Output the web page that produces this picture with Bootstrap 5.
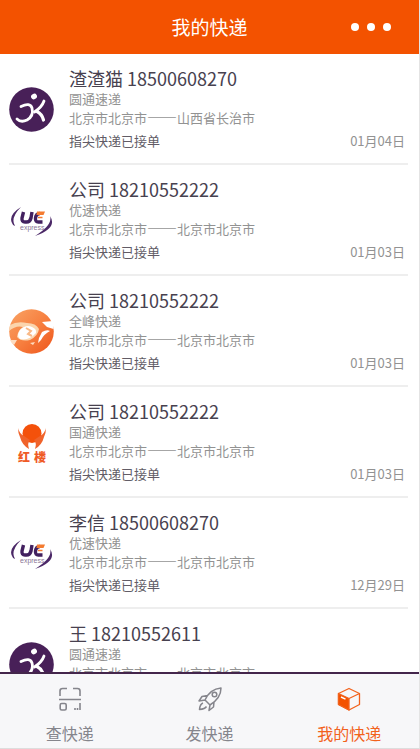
<!DOCTYPE html>
<html lang="zh-CN">
<head>
<meta charset="utf-8">
<meta name="viewport" content="width=device-width, initial-scale=1">
<title>我的快递</title>
<link href="https://cdn.jsdelivr.net/npm/bootstrap@5.3.0/dist/css/bootstrap.min.css" rel="stylesheet">
<style>
body{font-family:"Noto Sans CJK SC",sans-serif;color:#47414f}
.app{border-right:1px solid #e4e4e4;border-bottom:1px solid #ddd}
.topbar{background:#f35200;height:54px;grid-template-columns:1fr auto 1fr}
.topbar h1{font-size:19px;line-height:24px;font-weight:400}
.more-btn{background:none;gap:8px;margin-right:28px}
.more-btn i{width:8px;height:8px}
.parcels{scrollbar-width:none}
.parcels::-webkit-scrollbar{display:none}
.parcel{margin:0 11px 0 9px;padding:14px 3px 12px 0;border-bottom:2px solid #eee;gap:15px}
.parcel-text{min-height:83px}
.logo{width:45px;height:45px}
.who{font-size:18px;line-height:21px;font-weight:400}
.info{font-size:13px;line-height:19px;color:#929292}
.dash{font-size:15px;line-height:1}
.state{font-size:13px;line-height:19px;margin-top:4px}
.state span{color:#615c66}
.state time{color:#929292}
.tabs{background:#f7f7f9;border-top:2px solid #44264c;height:76px}
.tabs a{color:#85858c;font-size:16px;line-height:22px;gap:10px;padding-top:12px}
.tabs a.active{color:#f2621c}
.tabs svg{width:26px;height:26px}
</style>
<script src="https://cdn.jsdelivr.net/npm/bootstrap@5.3.0/dist/js/bootstrap.bundle.min.js"></script>
</head>
<body>
<svg class="position-absolute" width="0" height="0" aria-hidden="true">
<defs><linearGradient id="orb" x1="0" y1="0" x2="1" y2="1"><stop offset="0" stop-color="#f9a466"/><stop offset=".5" stop-color="#f78040"/><stop offset="1" stop-color="#ee541a"/></linearGradient></defs>
<symbol id="yto" viewBox="0 0 45 45">
<circle cx="22.500" cy="22.500" r="22.300" fill="#482058"/>
<ellipse cx="25" cy="9.500" rx="3" ry="2.700" transform="rotate(-30 25 9.500)" fill="#fff"/>
<g fill="none" stroke="#fff" stroke-linecap="round"><path d="M12 19.500Q21 15 23 21Q25 29 18 33Q12 36 8 32" stroke-width="2.800"/><path d="M35 14Q33 20 25.500 25" stroke-width="2.800"/><path d="M28 24.500Q33 27 34.500 33" stroke-width="3.200"/></g>
</symbol>
<symbol id="uc" viewBox="0 0 45 45">
<path d="M12 9Q-1 17 3 25Q4 28 6 28Q1 20 12 9Z" fill="#4b2867"/>
<path d="M41 18Q49 30 26 38Q44 27 41 18Z" fill="#4b2867"/>
<path d="M14.500 14L13 20Q12.500 24 16 24H17.500Q21 24 22 20L23 14" fill="none" stroke="#42205f" stroke-width="3.400"/>
<path d="M31 15.500Q27 15.500 26.500 20T30 24H33.500" fill="none" stroke="#42205f" stroke-width="3.400"/>
<path d="M28 13.500H36L34.500 17H27.500Z" fill="#f47b30"/><path d="M29 19.500H33.500" stroke="#f47b30" stroke-width="1.500"/>
<text x="11" y="32" font-size="7" font-family="Liberation Sans,sans-serif" fill="#8a7596">express</text>
</symbol>
<symbol id="qf" viewBox="0 0 45 45">
<circle cx="22.500" cy="22.500" r="22.300" fill="url(#orb)"/>
<path d="M1 16Q8 12 18 14Q27 14 30 20Q29 27 21 31Q12 33 8 28Q9 21 14 18Q7 16 0 22Z" fill="#fbd5ad"/>
<path d="M11 21Q17 15 23 18Q28 20 27 24Q20 32 11 30Q7 27 11 21Z" fill="#fff"/>
<path d="M17 19L22 22L19 25L23 27" fill="none" stroke="#f9b987" stroke-width="2"/>
<path d="M33 13L44 12Q45 16 44.500 20L38 18Z" fill="#fff"/>
<path d="M33 23Q38 20 41 22Q35 25 32 31L29 34L30 29Z" fill="#fff"/>
<path d="M1 31H8L5 36Q2 34 1 31ZM21 34L26 33L24 36Z" fill="#fddcc0"/>
</symbol>
<symbol id="hl" viewBox="0 0 45 45">
<circle cx="23" cy="13.500" r="9.500" fill="#f4510b"/>
<path d="M9 8Q10 13 15 16L21 20Q18 23 20 29Q13 25 11 17Q9 13 9 8ZM37 8Q36 13 31 16L25 20Q28 23 26 29Q33 25 35 17Q37 13 37 8Z" fill="#f0632b"/>
<text x="9" y="42" font-size="12" font-weight="900" font-family="Noto Sans CJK SC,sans-serif" fill="#ef5b26">红</text>
<text x="25" y="42" font-size="12" font-weight="900" font-family="Noto Sans CJK SC,sans-serif" fill="#ef5b26">楼</text>
</symbol>
</svg>
<div class="app d-flex flex-column vh-100">
<header class="topbar d-grid align-items-center text-white flex-shrink-0">
<span></span><h1 class="m-0">我的快递</h1>
<button type="button" class="more-btn border-0 p-0 d-flex align-items-center ms-auto" aria-label="更多"><i class="bg-white rounded-circle"></i><i class="bg-white rounded-circle"></i><i class="bg-white rounded-circle"></i></button>
</header>
<main class="parcels flex-grow-1 overflow-auto">
<ul class="list-unstyled m-0">
<li class="parcel d-flex align-items-center"><svg class="logo flex-shrink-0" aria-hidden="true"><use href="#yto"/></svg><div class="parcel-text flex-grow-1"><h2 class="who m-0">渣渣猫 18500608270</h2><div class="info">圆通速递</div><div class="info">北京市北京市<span class="dash">——</span>山西省长治市</div><div class="state d-flex justify-content-between"><span>指尖快递已接单</span><time>01月04日</time></div></div></li>
<li class="parcel d-flex align-items-center"><svg class="logo flex-shrink-0" aria-hidden="true"><use href="#uc"/></svg><div class="parcel-text flex-grow-1"><h2 class="who m-0">公司 18210552222</h2><div class="info">优速快递</div><div class="info">北京市北京市<span class="dash">——</span>北京市北京市</div><div class="state d-flex justify-content-between"><span>指尖快递已接单</span><time>01月03日</time></div></div></li>
<li class="parcel d-flex align-items-center"><svg class="logo flex-shrink-0" aria-hidden="true"><use href="#qf"/></svg><div class="parcel-text flex-grow-1"><h2 class="who m-0">公司 18210552222</h2><div class="info">全峰快递</div><div class="info">北京市北京市<span class="dash">——</span>北京市北京市</div><div class="state d-flex justify-content-between"><span>指尖快递已接单</span><time>01月03日</time></div></div></li>
<li class="parcel d-flex align-items-center"><svg class="logo flex-shrink-0" aria-hidden="true"><use href="#hl"/></svg><div class="parcel-text flex-grow-1"><h2 class="who m-0">公司 18210552222</h2><div class="info">国通快递</div><div class="info">北京市北京市<span class="dash">——</span>北京市北京市</div><div class="state d-flex justify-content-between"><span>指尖快递已接单</span><time>01月03日</time></div></div></li>
<li class="parcel d-flex align-items-center"><svg class="logo flex-shrink-0" aria-hidden="true"><use href="#uc"/></svg><div class="parcel-text flex-grow-1"><h2 class="who m-0">李信 18500608270</h2><div class="info">优速快递</div><div class="info">北京市北京市<span class="dash">——</span>北京市北京市</div><div class="state d-flex justify-content-between"><span>指尖快递已接单</span><time>12月29日</time></div></div></li>
<li class="parcel d-flex align-items-center"><svg class="logo flex-shrink-0" aria-hidden="true"><use href="#yto"/></svg><div class="parcel-text flex-grow-1"><h2 class="who m-0">王 18210552611</h2><div class="info">圆通速递</div><div class="info">北京市北京市<span class="dash">——</span>北京市北京市</div></div></li>
</ul>
</main>
<nav class="tabs row g-0 flex-shrink-0">
<a href="#" class="col d-flex flex-column align-items-center text-decoration-none"><svg viewBox="0 0 26 26" fill="none" stroke="currentColor" stroke-width="1.600" aria-hidden="true"><path d="M3 10V5Q3 2.500 5.500 2.500H10M16 2.500H20.500Q23 2.500 23 5V10M2 13.500H24M23 17V24M18 22V24M20.500 22V24"/><rect x="3.200" y="17.500" width="6" height="6.500" rx="1.500"/></svg>查快递</a>
<a href="#" class="col d-flex flex-column align-items-center text-decoration-none"><svg viewBox="0 0 26 26" fill="none" stroke="currentColor" stroke-width="1.500" stroke-linejoin="round" aria-hidden="true"><path d="M8 14Q13 3 24 2Q24 12 13 19L8 14ZM10.500 9.500L5 10.500L2 15L8 14M17 16L16.500 21L12 24.500L13 19M6 17Q3 18 2.500 23.500Q8 23 9.500 20.500"/><circle cx="17.500" cy="8.500" r="2.300"/></svg>发快递</a>
<a href="#" class="active col d-flex flex-column align-items-center text-decoration-none" aria-current="page"><svg viewBox="0 0 26 26" fill="none" stroke="currentColor" stroke-width="1.300" stroke-linejoin="round" aria-hidden="true"><path d="M13 2.500L23.500 7.500V18.500L13 24L2.500 18.500V7.500ZM13 12.500L23.500 7.500"/><path d="M2.500 7.500L13 12.500V24L2.500 18.500Z" fill="#f35200"/><path d="M5 11L9.500 13.200" stroke="#fff" stroke-width="1.500"/></svg>我的快递</a>
</nav>
</div>
</body>
</html>
